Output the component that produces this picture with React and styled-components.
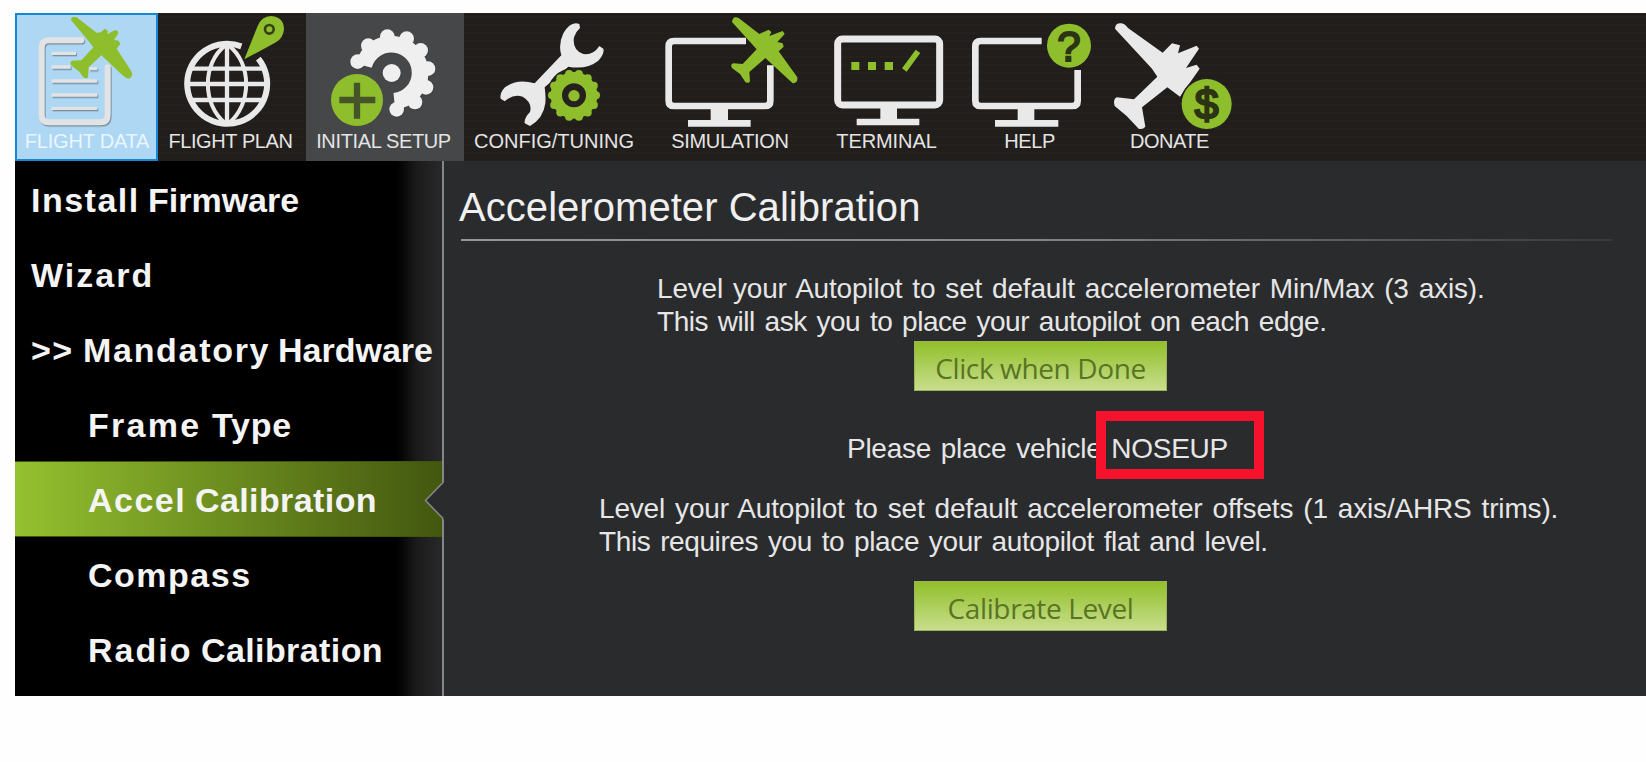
import React from "react";
import styled, { createGlobalStyle } from "styled-components";

const GREEN = "#8fbe2c";
const WHITE = "#e9e9ea";
const DARK = "#24211f";

const GlobalStyle = createGlobalStyle`
  * { box-sizing: border-box; }
  body {
    margin: 0;
    background: #fff;
    font-family: "Liberation Sans", Arial, sans-serif;
    overflow: hidden;
  }
`;

const Page = styled.div`
  width: 1646px;
  height: 762px;
  padding: 13px 0 0 15px;
  background: #fefefe;
`;

const Window = styled.div`
  height: 683px;
  display: flex;
  flex-direction: column;
  background: #2a2b2d;
`;

const Toolbar = styled.nav`
  height: 148px;
  flex: none;
  display: flex;
  background: repeating-linear-gradient(180deg, #211e1c 0 3px, #23201e 3px 5px, #201d1b 5px 8px);
`;

const toolBackground = { active: "#aed7f3", hover: "#464749" };

const ToolItem = styled.div`
  width: ${(p) => p.$width}px;
  height: 148px;
  display: flex;
  flex-direction: column;
  align-items: center;
  background: ${(p) => toolBackground[p.$state] || "transparent"};
  box-shadow: ${(p) => (p.$state === "active" ? "inset 0 0 0 2px #1488d4" : "none")};
`;

const ToolIcon = styled.svg`
  display: block;
  width: 100%;
  height: 118px;
  flex: none;
`;

const ToolLabel = styled.span`
  margin-top: -1px;
  font-size: 20px;
  line-height: 23px;
  letter-spacing: ${(p) => p.$track}px;
  margin-right: ${(p) => p.$nudge || 0}px;
  white-space: nowrap;
  color: ${(p) => (p.$state === "active" ? "#eaf6ff" : "#e4e4e4")};
`;

const Body = styled.div`
  flex: 1;
  display: flex;
  min-height: 0;
`;

const Sidebar = styled.aside`
  width: 429px;
  flex: none;
  border-right: 2px solid #868688;
  background: linear-gradient(90deg, #000 0 382px, #1b1b1c 402px, #29292b 427px);
`;

const MenuRow = styled.div`
  position: relative;
  height: ${(p) => (p.$selected ? 76 : 75)}px;
  margin-bottom: ${(p) => (p.$selected ? -1 : 0)}px;
  padding: 2px 0 0 ${(p) => (p.$nested ? 73 : 16)}px;
  display: flex;
  align-items: center;
  background: ${(p) => (p.$selected ? "linear-gradient(90deg, #94c12f, #43570f)" : "none")};
  box-shadow: ${(p) => (p.$selected ? "inset 0 1px #40560f, inset 0 -1px #40560f" : "none")};
`;

const MenuWord = styled.span`
  width: ${(p) => p.$width}px;
  flex: none;
  font-size: 34px;
  font-weight: bold;
  line-height: 38px;
  letter-spacing: ${(p) => p.$track}px;
  white-space: nowrap;
  color: #f4f4f4;
`;

const Notch = styled.svg`
  position: absolute;
  right: -2px;
  top: 21px;
  width: 20px;
  height: 38px;
`;

const Content = styled.main`
  flex: 1;
  display: flex;
  flex-direction: column;
  align-items: flex-start;
  padding: 24px 0 0 15px;
`;

const Heading = styled.h1`
  margin: 0;
  font-size: 40px;
  font-weight: normal;
  line-height: 44px;
  letter-spacing: 0.05px;
  white-space: nowrap;
  color: #f0f0f0;
`;

const Rule = styled.div`
  width: 1151px;
  height: 2px;
  margin: 10px 0 0 2px;
  background: linear-gradient(90deg, #969698, #858587 50%, #38393b);
`;

const TextBlock = styled.div`
  position: relative;
  margin: ${(p) => p.$top}px 0 0 ${(p) => p.$left}px;
  color: #e6e6e6;
`;

const Line = styled.div`
  font-size: 28px;
  line-height: 33px;
  letter-spacing: ${(p) => p.$track}px;
  word-spacing: 2.4px;
  white-space: nowrap;
`;

const Highlight = styled.div`
  position: absolute;
  left: 249px;
  top: -21px;
  width: 168px;
  height: 68px;
  border: 10px solid #f6112d;
`;

const GreenButton = styled.button`
  width: 253px;
  height: 50px;
  margin: ${(p) => p.$top}px 0 0 455px;
  padding: 4px 0 0;
  border: 1px solid #9cb55c;
  background: linear-gradient(180deg, #92bf2a, #c8de8c);
  font-family: "Open Sans", "Noto Sans", sans-serif;
  font-size: 28px;
  line-height: 38px;
  letter-spacing: -0.38px;
  white-space: nowrap;
  color: #587524;
`;

const Shaded = styled.g`
  filter: drop-shadow(3px 4px 2px rgba(60, 60, 60, 0.45));
`;

function FlightDataIcon() {
  return (
    <>
      <Shaded fill="none" stroke="#e2e3e5">
        <path strokeWidth="18" strokeLinecap="round" d="M244 121H147Q125 121 125 143V345Q125 367 147 367H301Q323 367 323 345V202" />
        <path strokeWidth="10" d="M155 160H228M155 201H212M268 206H292M155 243H292M155 285H292M155 325H292" />
      </Shaded>
      <path fill={GREEN} d="M213 60Q214 46 230 52L290 98L303 97L314 86L324 93L322 102L346 90Q357 92 354 102L342 120L356 122L361 132L350 146L394 214Q401 229 388 236Q378 236 370 228L304 166L266 202L264 232Q260 238 250 232L238 215L216 198Q206 188 216 182L244 181L280 142L268 126Z" />
    </>
  );
}

function FlightPlanIcon() {
  return (
    <>
      <g fill="none" stroke={WHITE}>
        <path strokeWidth="18" d="M724 139A120 120 0 1 0 775 176" />
        <path strokeWidth="13" d="M574 206H790M564 252H798M574 300H790M681 134V372" />
        <path strokeWidth="12" d="M676 136C606 190 606 314 676 370M686 136C756 190 756 314 686 370" />
      </g>
      <path fill={GREEN} d="M733 178L772 80Q784 48 814 48Q852 52 852 88Q850 114 828 127Z" />
      <circle cx="808" cy="88" r="13" fill="none" stroke="#354312" strokeWidth="8" />
    </>
  );
}

const SETUP_TEETH = [[173, 185], [205, 137], [262, 110], [320, 116], [362, 151], [384, 206], [378, 262], [345, 306], [290, 328]];

function InitialSetupIcon() {
  return (
    <>
      <Shaded>
        <path fill="none" stroke="#efefef" strokeWidth="50" d="M191 197A86 86 0 1 1 283 304" />
        {SETUP_TEETH.map(([x, y]) => (
          <circle key={x} cx={x} cy={y} r="22" fill="#efefef" />
        ))}
        <circle cx="275" cy="219" r="27" fill="#efefef" />
      </Shaded>
      <circle cx="171" cy="300" r="78" fill={GREEN} />
      <path fill="none" stroke="#46542a" strokeWidth="19" d="M118 300H226M171 248V356" />
    </>
  );
}

const TUNING_TEETH = Array.from({ length: 14 }, (_, i) => (i * 2 * Math.PI) / 14);

function ConfigTuningIcon() {
  return (
    <>
      <path fill={WHITE} d="M838 72Q812 62 790 100Q774 134 784 166L704 250Q650 234 615 262Q598 280 602 296L614 304Q640 280 668 290Q698 308 690 336Q672 354 674 370L690 378Q730 356 736 310Q738 290 734 262L805 200Q860 210 895 182Q914 162 910 146L898 138Q880 166 850 162Q816 150 822 112Q828 94 840 84Z" />
      <circle cx="822" cy="286" r="82" fill={DARK} />
      <circle cx="822" cy="286" r="53" fill="none" stroke={GREEN} strokeWidth="34" />
      {TUNING_TEETH.map((a) => (
        <circle key={a} cx={822 + 66 * Math.cos(a)} cy={286 + 66 * Math.sin(a)} r="12" fill={GREEN} />
      ))}
      <circle cx="822" cy="287" r="17" fill={GREEN} />
    </>
  );
}

function SimulationIcon() {
  return (
    <>
      <g fill="none" stroke={WHITE}>
        <path strokeWidth="20" d="M318 123H102Q86 123 86 139V302Q86 318 102 318H375Q391 318 391 302V196" />
        <path strokeWidth="52" d="M238 326V364" />
        <path strokeWidth="20" d="M144 370H332" />
      </g>
      <path fill={GREEN} d="M276 66Q278 46 296 54L358 102L386 89L394 96L388 108L428 93L434 102L412 126L428 130L431 140L416 154L472 232Q474 250 458 250L376 174L328 216L330 244Q326 252 316 246L300 222L276 204Q270 192 280 190L308 192L350 148Z" />
    </>
  );
}

function TerminalIcon() {
  return (
    <>
      <g fill="none" stroke={WHITE}>
        <rect x="593" y="117" width="306" height="198" rx="14" strokeWidth="21" />
        <path strokeWidth="50" d="M746 322V362" />
        <path strokeWidth="20" d="M650 366H838" />
      </g>
      <path fill="none" stroke={GREEN} strokeWidth="24" d="M634 198H658M684 198H708M734 198H759" />
      <path fill="none" stroke={GREEN} strokeWidth="17" d="M793 210L834 154" />
    </>
  );
}

function HelpIcon() {
  return (
    <>
      <g fill="none" stroke={WHITE}>
        <path strokeWidth="20" d="M275 123H92Q76 123 76 139V302Q76 318 92 318H367Q383 318 383 302V210" />
        <path strokeWidth="50" d="M228 326V364" />
        <path strokeWidth="20" d="M135 370H325" />
      </g>
      <circle cx="357" cy="137" r="66" fill={GREEN} />
      <text x="357" y="182" fontSize="126" textAnchor="middle" fill="#2c3414" stroke="#2c3414" strokeWidth="6">?</text>
    </>
  );
}

function DonateIcon() {
  return (
    <>
      <path fill={WHITE} d="M495 86Q496 68 514 70Q524 71 534 84L638 158L666 130L690 136L684 160L740 137L747 146L708 204L740 194L749 206L728 236L690 290L652 262L576 322L586 380Q578 390 566 386L530 348L494 318Q488 298 500 292L552 298L622 230L606 206Z" />
      <circle cx="770" cy="312" r="80" fill={DARK} />
      <circle cx="770" cy="312" r="75" fill={GREEN} />
      <text x="770" y="357" fontSize="128" textAnchor="middle" fill="#2c3414" stroke="#2c3414" strokeWidth="7">$</text>
    </>
  );
}

const tools = [
  { label: "FLIGHT DATA", width: 143, track: -0.2, nudge: -1, state: "active", view: 45, Icon: FlightDataIcon },
  { label: "FLIGHT PLAN", width: 148, track: -0.4, nudge: 3, view: 474, Icon: FlightPlanIcon },
  { label: "INITIAL SETUP", width: 158, track: -0.35, nudge: 3, state: "hover", view: 18, Icon: InitialSetupIcon },
  { label: "CONFIG/TUNING", width: 180, track: 0, nudge: 0, view: 492, Icon: ConfigTuningIcon },
  { label: "SIMULATION", width: 172, track: -0.35, nudge: 0, view: 12, Icon: SimulationIcon },
  { label: "TERMINAL", width: 144, track: -0.1, nudge: 3, view: 528, Icon: TerminalIcon },
  { label: "HELP", width: 139, track: -0.4, nudge: 0, view: 30, Icon: HelpIcon },
  { label: "DONATE", width: 141, track: -0.5, nudge: 0, view: 447, Icon: DonateIcon },
];

// Each word: [text, advance width, letter spacing]
const menu = [
  { words: [["Install", 117, 1.5], ["Firmware", 156, 0]] },
  { words: [["Wizard", 130, 2]] },
  { words: [[">>", 52, 1.5], ["Mandatory", 195, 1.7], ["Hardware", 160, 0]] },
  { nested: true, words: [["Frame", 124, 2.3], ["Type", 90, 0.8]] },
  { nested: true, selected: true, words: [["Accel", 107, 1.5], ["Calibration", 190, 0.4]] },
  { nested: true, words: [["Compass", 170, 1.5]] },
  { nested: true, words: [["Radio", 113, 2], ["Calibration", 190, 0.4]] },
];

export default function App() {
  return (
    <Page>
      <GlobalStyle />
      <Window>
        <Toolbar>
          {tools.map(({ label, width, track, nudge, state, view, Icon }) => (
            <ToolItem key={label} $width={width} $state={state}>
              <ToolIcon viewBox={`${view} 39 ${width * 3} 354`}>
                <Icon />
              </ToolIcon>
              <ToolLabel $track={track} $nudge={nudge} $state={state}>{label}</ToolLabel>
            </ToolItem>
          ))}
        </Toolbar>
        <Body>
          <Sidebar>
            {menu.map(({ words, nested, selected }, i) => (
              <MenuRow key={i} $nested={nested} $selected={selected}>
                {words.map(([text, width, track]) => (
                  <MenuWord key={text} $width={width} $track={track}>{text}</MenuWord>
                ))}
                {selected && (
                  <Notch viewBox="0 0 20 38">
                    <path d="M20 0V38L19 36L1 18.5L19 1Z" fill="#2a2b2d" />
                    <path d="M19 0.5L1.5 18.5L19 36.5" fill="none" stroke="#868688" strokeWidth="1.6" />
                  </Notch>
                )}
              </MenuRow>
            ))}
          </Sidebar>
          <Content>
            <Heading>Accelerometer Calibration</Heading>
            <Rule />
            <TextBlock $top={31} $left={198}>
              <Line $track={-0.19}>Level your Autopilot to set default accelerometer Min/Max (3 axis).</Line>
              <Line $track={-0.46}>This will ask you to place your autopilot on each edge.</Line>
            </TextBlock>
            <GreenButton $top={3}>Click when Done</GreenButton>
            <TextBlock $top={41} $left={388}>
              <Line $track={-0.28}>Please place vehicle NOSEUP</Line>
              <Highlight />
            </TextBlock>
            <TextBlock $top={27} $left={140}>
              <Line $track={-0.175}>Level your Autopilot to set default accelerometer offsets (1 axis/AHRS trims).</Line>
              <Line $track={-0.39}>This requires you to place your autopilot flat and level.</Line>
            </TextBlock>
            <GreenButton $top={23}>Calibrate Level</GreenButton>
          </Content>
        </Body>
      </Window>
    </Page>
  );
}
